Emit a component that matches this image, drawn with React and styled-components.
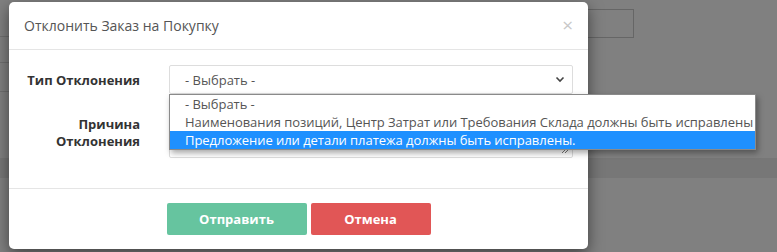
import styled, { createGlobalStyle } from "styled-components";

const GlobalStyle = createGlobalStyle`
  html, body {
    margin: 0;
    padding: 0;
    background: #808080;
    font-family: "Open Sans", "Liberation Sans", sans-serif;
    font-size: 13px;
  }
`;

const Page = styled.div`
  position: relative;
  width: 777px;
  height: 252px;
  overflow: hidden;
  background: #808080;
`;

const BackTable = styled.div`
  width: 560px;
  padding-top: 36px;
`;

const BackRow = styled.div`
  height: ${(p) => p.h}px;
  border-top: 1px solid #6f6f6f;
`;

const BackInput = styled.div`
  position: absolute;
  top: 9px;
  left: 540px;
  width: 92px;
  height: 27px;
  border: 1px solid #666;
`;

const BackBand = styled.div`
  position: absolute;
  top: 158px;
  left: 0;
  right: 0;
  height: 20px;
  background: #777;
`;

const Modal = styled.div`
  position: absolute;
  top: 2px;
  left: 9px;
  width: 579px;
  height: 247px;
  background: #fff;
  border-radius: 5px;
  box-shadow: 0 5px 15px rgba(0, 0, 0, 0.5);
  color: #555;
`;

const Header = styled.div`
  display: flex;
  align-items: center;
  justify-content: space-between;
  padding: 14px 15px;
  border-bottom: 1px solid #e5e5e5;
`;

const Title = styled.h4`
  margin: 0;
  font-size: 14px;
  font-weight: 400;
  line-height: 19px;
  color: #555;
`;

const Close = styled.span`
  font-size: 19px;
  line-height: 19px;
  color: #c8c8c8;
`;

const Body = styled.div`
  padding: 15px 15px 0;
`;

const FormRow = styled.div`
  display: grid;
  grid-template-columns: 145px 1fr;
  margin-bottom: ${(p) => p.mb}px;
`;

const Label = styled.label`
  text-align: right;
  padding: 7px 29px 0 0;
  font-weight: 700;
  line-height: 17px;
  color: #333;
`;

const SelectWrap = styled.div`
  position: relative;
`;

const SelectBox = styled.div`
  display: flex;
  align-items: center;
  justify-content: space-between;
  height: 27px;
  padding: 0 7px 0 15px;
  border: 1px solid #ddd;
  border-radius: 2px;
  color: #555;
`;

const Dropdown = styled.ul`
  position: absolute;
  top: 29px;
  left: 0;
  width: 585px;
  margin: 0;
  padding: 0;
  list-style: none;
  background: #fff;
  border: 1px solid #8a8a8a;
  box-shadow: 2px 3px 6px rgba(0, 0, 0, 0.35);
  z-index: 2;
`;

const Option = styled.li`
  height: 18px;
  line-height: 18px;
  padding-left: 15px;
  white-space: nowrap;
  letter-spacing: -0.04px;
  color: ${(p) => (p.active ? "#fff" : "#555")};
  background: ${(p) => (p.active ? "#1e90ff" : "transparent")};
`;

const TextArea = styled.div`
  position: relative;
  height: 47px;
  border: 1px solid #ddd;
  border-radius: 2px;
`;

const Grip = styled.svg`
  position: absolute;
  right: 3px;
  bottom: 3px;
`;

const Footer = styled.div`
  display: flex;
  justify-content: center;
  gap: 4px;
  padding: 14px 15px;
  border-top: 1px solid #e5e5e5;
`;

const Button = styled.button`
  width: ${(p) => p.w}px;
  height: 32px;
  border: none;
  border-radius: 2px;
  background: ${(p) => p.bg};
  color: #fff;
  font-family: inherit;
  font-size: 13px;
  font-weight: 700;
`;

const options = [
  "- Выбрать -",
  "Наименования позиций, Центр Затрат или Требования Склада должны быть исправлены",
  "Предложение или детали платежа должны быть исправлены.",
];

function App() {
  return (
    <Page>
      <GlobalStyle />
      <BackTable>
        <BackRow h={25} />
        <BackRow h={28} />
        <BackRow h={40} />
      </BackTable>
      <BackInput />
      <BackBand />

      <Modal>
        <Header>
          <Title>Отклонить Заказ на Покупку</Title>
          <Close>×</Close>
        </Header>
        <Body>
          <FormRow mb={15}>
            <Label>Тип Отклонения</Label>
            <SelectWrap>
              <SelectBox>
                <span>- Выбрать -</span>
                <svg width="10" height="7" viewBox="0 0 10 7">
                  <path d="M1.5 1.5 L5 5 L8.5 1.5" fill="none" stroke="#444" strokeWidth="1.6" />
                </svg>
              </SelectBox>
              <Dropdown>
                {options.map((o, i) => (
                  <Option key={i} active={i === 2}>
                    {o}
                  </Option>
                ))}
              </Dropdown>
            </SelectWrap>
          </FormRow>
          <FormRow mb={30}>
            <Label>
              Причина
              <br />
              Отклонения
            </Label>
            <TextArea>
              <Grip width="8" height="8" viewBox="0 0 8 8">
                <path d="M7 1 L1 7 M7 4 L4 7" stroke="#777" strokeWidth="1" />
              </Grip>
            </TextArea>
          </FormRow>
        </Body>
        <Footer>
          <Button w={140} bg="#66c49f">Отправить</Button>
          <Button w={120} bg="#e15656">Отмена</Button>
        </Footer>
      </Modal>
    </Page>
  );
}

export default App;
